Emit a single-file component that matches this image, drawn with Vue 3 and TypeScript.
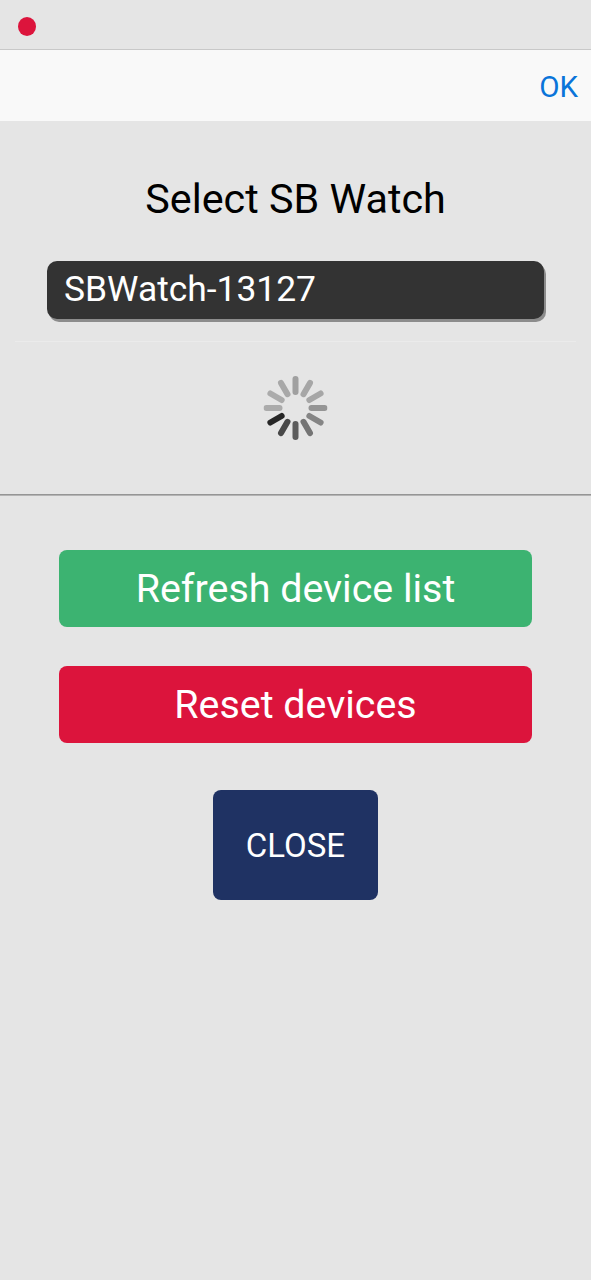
<script setup lang="ts">
const spokes: { angle: number; color: string }[] = [
  { angle: 0, color: '#a0a0a0' },
  { angle: 30, color: '#a6a6a6' },
  { angle: 60, color: '#a6a6a6' },
  { angle: 90, color: '#959595' },
  { angle: 120, color: '#858585' },
  { angle: 150, color: '#747474' },
  { angle: 180, color: '#5c5c5c' },
  { angle: 210, color: '#484848' },
  { angle: 240, color: '#262626' },
  { angle: 270, color: '#ababab' },
  { angle: 300, color: '#ababab' },
  { angle: 330, color: '#a8a8a8' }
]
</script>

<template>
  <div class="screen">
    <div class="status"><span class="dot"></span></div>
    <div class="nav"><span class="ok">OK</span></div>
    <h1 class="title">Select SB Watch</h1>
    <div class="device">SBWatch-13127</div>
    <div class="rule-soft"></div>
    <div class="spinner-wrap">
      <svg class="spinner" width="64" height="64" viewBox="-32 -32 64 64">
        <line
          v-for="s in spokes"
          :key="s.angle"
          x1="0"
          y1="-29"
          x2="0"
          y2="-16"
          :stroke="s.color"
          stroke-width="6"
          stroke-linecap="round"
          :transform="`rotate(${s.angle})`"
        />
      </svg>
    </div>
    <div class="rule"></div>
    <div class="actions">
      <button class="btn green">Refresh device list</button>
      <button class="btn red">Reset devices</button>
      <button class="close">CLOSE</button>
    </div>
  </div>
</template>

<style>
html, body { margin: 0; background: #e5e5e5; }
</style>

<style scoped>
.screen {
  width: 591px;
  height: 1280px;
  background: #e5e5e5;
  font-family: Roboto, "Liberation Sans", sans-serif;
  overflow: hidden;
}
.status {
  height: 50px;
  display: flex;
  align-items: center;
  padding: 4px 0 0 18px;
  box-sizing: border-box;
  border-bottom: 1px solid #c8c8c8;
}
.dot {
  width: 18px;
  height: 19px;
  border-radius: 50%;
  background: #dc143c;
}
.nav {
  height: 71px;
  background: #f9f9f9;
  display: flex;
  align-items: center;
  justify-content: flex-end;
  padding-right: 13px;
}
.ok {
  font-size: 29.5px;
  color: #0a74d9;
  position: relative;
  top: 1px;
}
.title {
  margin: 54px 0 0;
  height: 48px;
  line-height: 48px;
  font-size: 41.3px;
  font-weight: 400;
  text-align: center;
  color: #000;
}
.device {
  margin: 38px 0 0 47px;
  width: 497px;
  height: 58px;
  box-sizing: border-box;
  padding-left: 17px;
  line-height: 56px;
  background: #333;
  color: #fff;
  font-size: 35.4px;
  border-radius: 10px;
  box-shadow: 2px 3px 0 #8c8c8c;
}
.rule-soft {
  margin: 22px 15px 0;
  height: 1px;
  background: #ebebeb;
}
.spinner-wrap {
  height: 152px;
  display: flex;
  justify-content: center;
  padding-top: 34px;
  box-sizing: border-box;
}
.spinner { transform: translateX(-0.5px); }
.rule {
  height: 2px;
  background: linear-gradient(#989898, #929292 50%, #d6d6d6);
}
.actions {
  display: flex;
  flex-direction: column;
  align-items: center;
  padding-top: 54px;
}
.btn {
  width: 473px;
  height: 77px;
  border: 0;
  border-radius: 8px;
  color: #fff;
  font-family: inherit;
  font-size: 39.4px;
  padding: 0;
}
.green { background: #3cb371; }
.red { background: #dc143c; margin-top: 39px; }
.close {
  width: 165px;
  height: 110px;
  margin-top: 47px;
  border: 0;
  border-radius: 8px;
  background: #1f3263;
  color: #fff;
  font-family: inherit;
  font-size: 33px;
  padding: 0;
}
</style>
